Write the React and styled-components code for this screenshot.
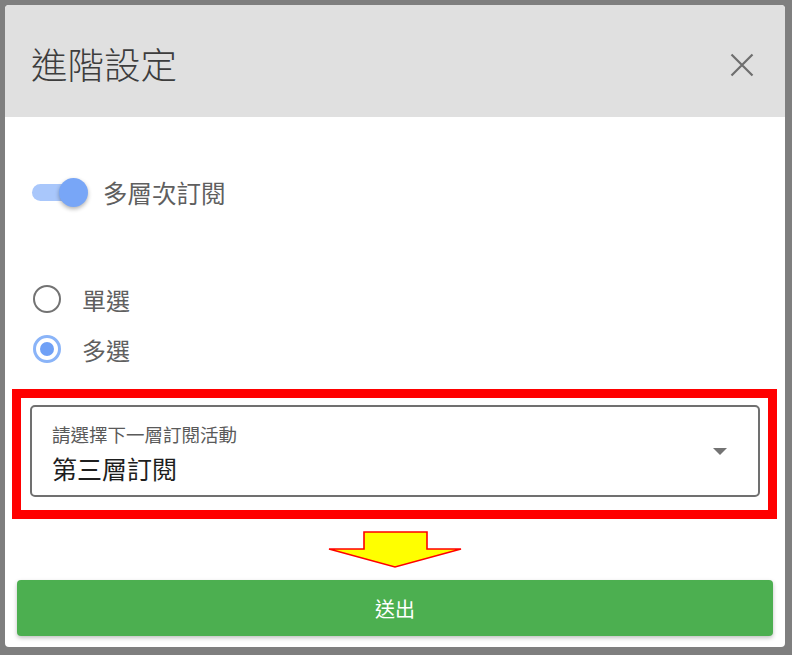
import React, { useState } from "react";
import styled, { createGlobalStyle } from "styled-components";

const GlobalStyle = createGlobalStyle`
  body {
    margin: 0;
    background: #7f7f7f;
    font-family: "Noto Sans CJK TC", "Noto Sans", sans-serif;
  }
`;

export default function App() {
  const [multiLevel, setMultiLevel] = useState(true);
  const [mode, setMode] = useState("multi");

  return (
    <>
      <GlobalStyle />
      <Dialog>
        <Header>
          <Title>進階設定</Title>
          <CloseButton aria-label="close">
            <svg width="24" height="24" viewBox="0 0 24 24">
              <path d="M1.5 1.5 L22.5 22.5 M22.5 1.5 L1.5 22.5" stroke="#6e6e6e" strokeWidth="2.2" fill="none" />
            </svg>
          </CloseButton>
        </Header>
        <Body>
          <ToggleRow onClick={() => setMultiLevel(!multiLevel)}>
            <Switch>
              <Track on={multiLevel} />
              <Thumb on={multiLevel} />
            </Switch>
            <Label>多層次訂閱</Label>
          </ToggleRow>

          <RadioGroup>
            <RadioRow onClick={() => setMode("single")}>
              <Radio checked={mode === "single"} />
              <Label>單選</Label>
            </RadioRow>
            <RadioRow onClick={() => setMode("multi")}>
              <Radio checked={mode === "multi"} />
              <Label>多選</Label>
            </RadioRow>
          </RadioGroup>

          <Highlight>
            <Select>
              <SelectText>
                <SelectLabel>請選擇下一層訂閱活動</SelectLabel>
                <SelectValue>第三層訂閱</SelectValue>
              </SelectText>
              <Caret />
            </Select>
          </Highlight>

          <ArrowWrap>
            <svg width="136" height="40" viewBox="0 0 136 40">
              <polygon
                points="37,2 100,2 100,19 134,19 68,37 2,19 37,19"
                fill="#ffff00"
                stroke="#ff0000"
                strokeWidth="1.6"
              />
            </svg>
          </ArrowWrap>

          <Submit>送出</Submit>
        </Body>
      </Dialog>
    </>
  );
}

const Dialog = styled.div`
  width: 780px;
  margin: 5px;
  background: #fff;
  border-radius: 4px;
  overflow: hidden;
  display: flex;
  flex-direction: column;
`;

const Header = styled.div`
  height: 112px;
  box-sizing: border-box;
  background: #e0e0e0;
  display: flex;
  align-items: center;
  justify-content: space-between;
  padding: 6px 31px 0 26px;
`;

const Title = styled.h2`
  margin: 0;
  font-size: 36.5px;
  line-height: 1;
  font-weight: 300;
  color: #3d3d3d;
`;

const CloseButton = styled.button`
  border: none;
  background: none;
  padding: 0;
  margin-top: 2px;
  display: flex;
  cursor: pointer;
`;

const Body = styled.div`
  display: flex;
  flex-direction: column;
  padding: 0 12px 11px;
`;

const ToggleRow = styled.div`
  margin-top: 55px;
  height: 40px;
  display: flex;
  align-items: center;
  padding-left: 15px;
  cursor: pointer;
`;

const Switch = styled.div`
  position: relative;
  width: 57px;
  height: 29px;
  display: flex;
  align-items: center;
`;

const Track = styled.div`
  width: 48px;
  height: 17px;
  border-radius: 9px;
  background: ${(p) => (p.on ? "#a9c7fb" : "#bdbdbd")};
`;

const Thumb = styled.div`
  position: absolute;
  top: 0;
  left: ${(p) => (p.on ? "27px" : "0")};
  width: 29px;
  height: 29px;
  border-radius: 50%;
  background: ${(p) => (p.on ? "#78a6f7" : "#fafafa")};
  box-shadow: 0 2px 4px rgba(0, 0, 0, 0.3);
`;

const Label = styled.span`
  margin-left: 14px;
  font-size: 24.5px;
  color: #5f5f5f;
`;

const RadioGroup = styled.div`
  margin-top: 62px;
  display: flex;
  flex-direction: column;
`;

const RadioRow = styled.div`
  height: 50px;
  display: flex;
  align-items: center;
  padding-left: 16px;
  cursor: pointer;

  ${Label} {
    margin-left: 21px;
    font-size: 24px;
  }
`;

const Radio = styled.span`
  width: 28px;
  height: 28px;
  box-sizing: border-box;
  border-radius: 50%;
  border: ${(p) => (p.checked ? "3.5px solid #8ab4f8" : "2.5px solid #737373")};
  display: flex;
  align-items: center;
  justify-content: center;

  &::after {
    content: "";
    width: 14px;
    height: 14px;
    border-radius: 50%;
    background: #6fa0f6;
    display: ${(p) => (p.checked ? "block" : "none")};
  }
`;

const Highlight = styled.div`
  margin: 15px -4px 0 -5px;
  height: 130px;
  box-sizing: border-box;
  border: 9px solid #ff0000;
  padding: 7px 8px 13px 9px;
`;

const Select = styled.div`
  height: 92px;
  box-sizing: border-box;
  border: 2px solid #707070;
  border-radius: 5px;
  display: flex;
  align-items: center;
  padding: 0 31px 0 20px;
`;

const SelectText = styled.div`
  flex: 1;
  display: flex;
  flex-direction: column;
  padding-top: 4px;
`;

const SelectLabel = styled.span`
  font-size: 18.5px;
  line-height: 22px;
  color: #5a5a5a;
`;

const SelectValue = styled.span`
  margin-top: 8px;
  font-size: 25px;
  line-height: 30px;
  color: #1e1e1e;
`;

const Caret = styled.span`
  width: 0;
  height: 0;
  border-left: 7px solid transparent;
  border-right: 7px solid transparent;
  border-top: 7px solid #737373;
`;

const ArrowWrap = styled.div`
  margin-top: 11px;
  height: 40px;
  display: flex;
  justify-content: center;
`;

const Submit = styled.button`
  margin-top: 10px;
  height: 56px;
  border: none;
  border-radius: 4px;
  background: #4caf50;
  color: #fff;
  font-family: inherit;
  font-size: 20px;
  box-shadow: 0 2px 4px rgba(0, 0, 0, 0.25);
  cursor: pointer;
`;
